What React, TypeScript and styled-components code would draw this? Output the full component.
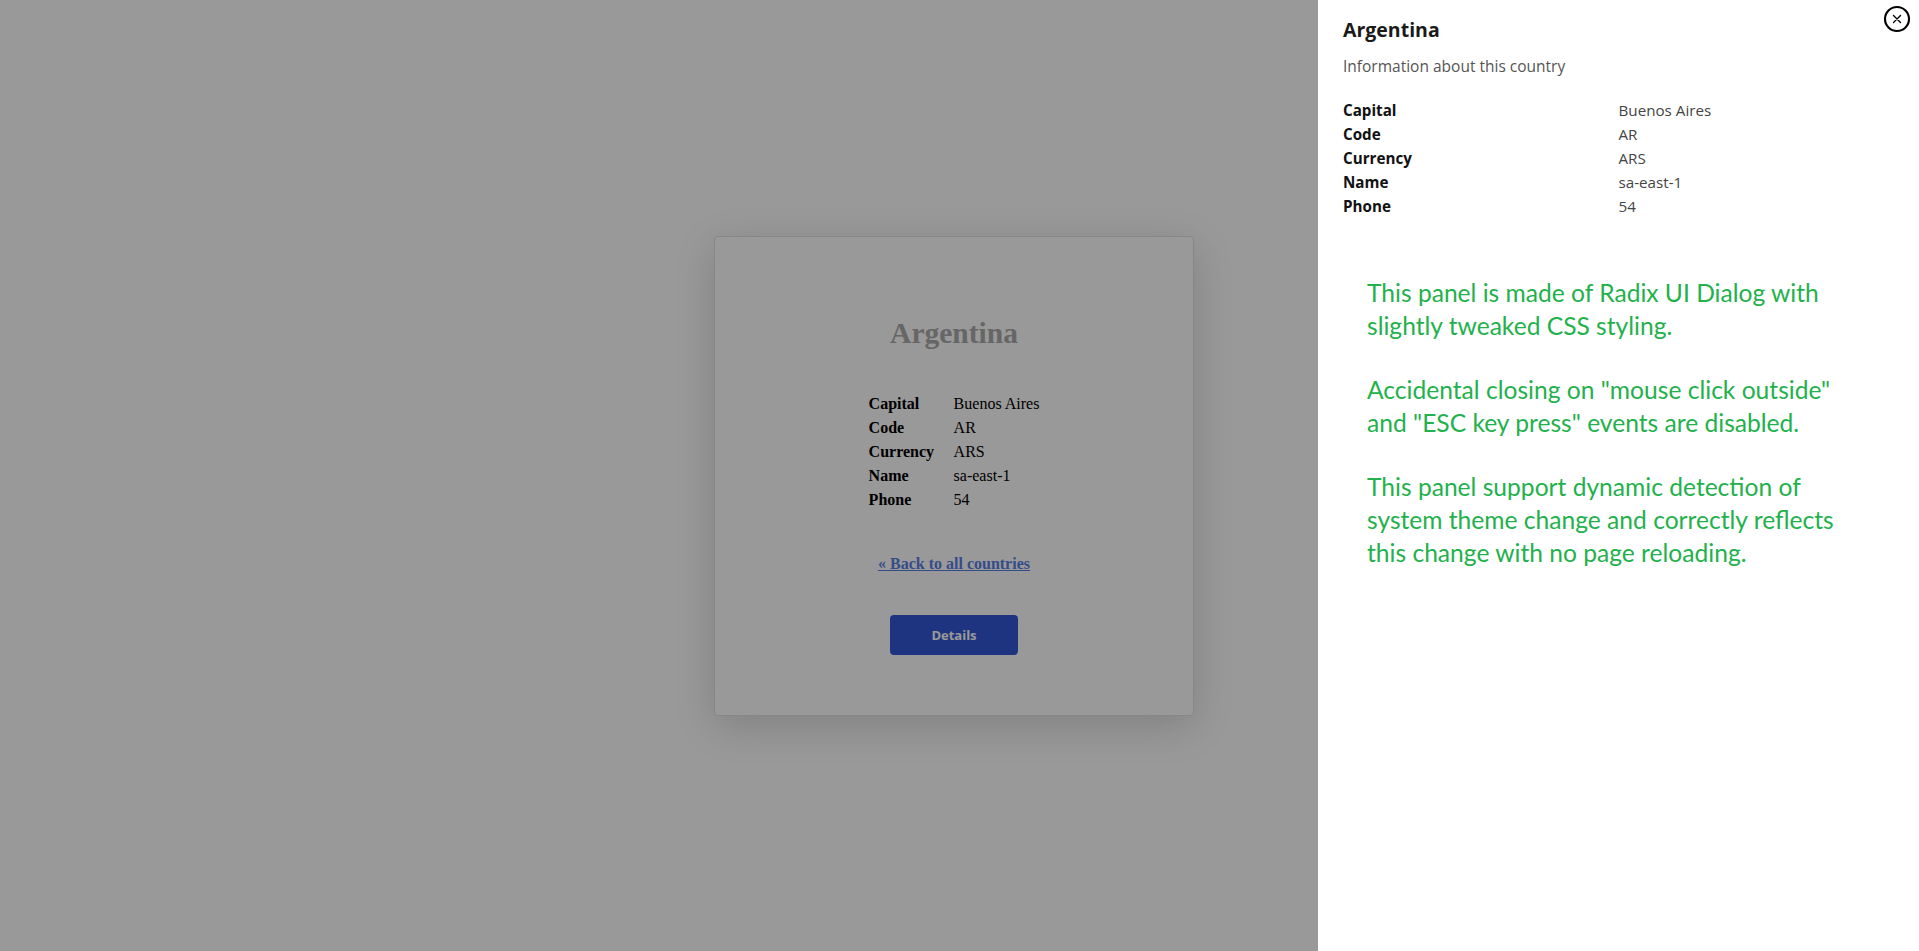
import React from 'react';
import styled, { createGlobalStyle } from 'styled-components';

interface Field {
  label: string;
  value: string;
}

const fields: Field[] = [
  { label: 'Capital', value: 'Buenos Aires' },
  { label: 'Code', value: 'AR' },
  { label: 'Currency', value: 'ARS' },
  { label: 'Name', value: 'sa-east-1' },
  { label: 'Phone', value: '54' },
];

const notes: string[][] = [
  ['This panel is made of Radix UI Dialog with', 'slightly tweaked CSS styling.'],
  ['Accidental closing on "mouse click outside"', 'and "ESC key press" events are disabled.'],
  [
    'This panel support dynamic detection of',
    'system theme change and correctly reflects',
    'this change with no page reloading.',
  ],
];

function CloseIcon() {
  return (
    <svg width="30" height="30" viewBox="0 0 24 24" fill="none" stroke="#000" strokeWidth="1.7" strokeLinecap="round">
      <circle cx="12" cy="12" r="9.6" />
      <path d="M14.8 9.2l-5.6 5.6M9.2 9.2l5.6 5.6" strokeWidth="1.1" />
    </svg>
  );
}

function App() {
  return (
    <>
      <GlobalStyle />
      <Page>
        <Card>
          <CardTitle>Argentina</CardTitle>
          <CardTable>
            {fields.map((f) => (
              <React.Fragment key={f.label}>
                <dt>{f.label}</dt>
                <dd>{f.value}</dd>
              </React.Fragment>
            ))}
          </CardTable>
          <BackLink href="#">« Back to all countries</BackLink>
          <DetailsButton type="button">Details</DetailsButton>
        </Card>
      </Page>
      <Overlay />
      <Panel>
        <CloseButton type="button" aria-label="Close">
          <CloseIcon />
        </CloseButton>
        <PanelTitle>Argentina</PanelTitle>
        <PanelDescription>Information about this country</PanelDescription>
        <PanelTable>
          {fields.map((f) => (
            <React.Fragment key={f.label}>
              <dt>{f.label}</dt>
              <dd>{f.value}</dd>
            </React.Fragment>
          ))}
        </PanelTable>
        <Notes>
          {notes.map((lines, i) => (
            <Note key={i}>
              {lines.map((line) => (
                <span key={line}>{line}</span>
              ))}
            </Note>
          ))}
        </Notes>
      </Panel>
    </>
  );
}

export default App;

const GlobalStyle = createGlobalStyle`
  html, body {
    margin: 0;
    padding: 0;
    background: #fff;
  }

  body {
    font-family: "Liberation Serif", "Times New Roman", serif;
    overflow: hidden;
  }
`;

const Page = styled.main`
  height: 951px;
  display: flex;
  align-items: center;
  justify-content: center;
  padding-right: 11px;
  box-sizing: border-box;
`;

const Card = styled.section`
  width: 480px;
  height: 480px;
  box-sizing: border-box;
  border: 1px solid #e2e2e2;
  border-radius: 4px;
  background: #fff;
  box-shadow: 0 10px 40px rgba(0, 0, 0, 0.16);
  display: flex;
  flex-direction: column;
  align-items: center;
  padding-top: 78px;
`;

const CardTitle = styled.h1`
  margin: 0;
  font-size: 29.5px;
  line-height: 36px;
  font-weight: 700;
  color: #ababab;
`;

const CardTable = styled.dl`
  margin: 41px 0 0;
  display: grid;
  grid-template-columns: 85px auto;
  font-size: 16px;
  line-height: 24px;
  color: #000;

  dt {
    font-weight: 700;
  }

  dd {
    margin: 0;
  }
`;

const BackLink = styled.a`
  margin-top: 43px;
  font-size: 16px;
  line-height: 18px;
  font-weight: 700;
  color: #5a7fe6;
  text-decoration: underline;
`;

const DetailsButton = styled.button`
  margin-top: 42px;
  width: 128px;
  height: 40px;
  border: none;
  border-radius: 4px;
  background: #3457d5;
  color: #fff;
  font-family: "Open Sans", sans-serif;
  font-size: 13px;
  font-weight: 700;
  cursor: pointer;
`;

const Overlay = styled.div`
  position: fixed;
  inset: 0;
  background: rgba(0, 0, 0, 0.4);
`;

const Panel = styled.aside`
  position: fixed;
  top: 0;
  right: 0;
  bottom: 0;
  width: 601px;
  box-sizing: border-box;
  background: #fff;
  padding: 16px 25px;
  font-family: "Open Sans", sans-serif;
  color: #1a1a1a;
`;

const CloseButton = styled.button`
  position: absolute;
  top: 4px;
  right: 7px;
  padding: 0;
  border: none;
  background: none;
  display: flex;
  cursor: pointer;
`;

const PanelTitle = styled.h2`
  margin: 0;
  font-size: 19.5px;
  line-height: 28px;
  font-weight: 700;
`;

const PanelDescription = styled.p`
  margin: 11px 0 0;
  font-size: 15.5px;
  line-height: 22px;
  color: #555;
`;

const PanelTable = styled.dl`
  margin: 21px 0 0;
  display: grid;
  grid-template-columns: 1fr 1fr;
  font-size: 15.2px;
  line-height: 24px;

  dt {
    font-weight: 700;
    color: #111;
  }

  dd {
    margin: 0;
    color: #444;
  }
`;

const Notes = styled.div`
  margin-top: 58px;
  padding-left: 24px;
  display: flex;
  flex-direction: column;
  gap: 31px;
  font-family: Lato, sans-serif;
  font-size: 24.6px;
  line-height: 33px;
  color: #22b14c;
`;

const Note = styled.p`
  margin: 0;
  display: flex;
  flex-direction: column;
`;
